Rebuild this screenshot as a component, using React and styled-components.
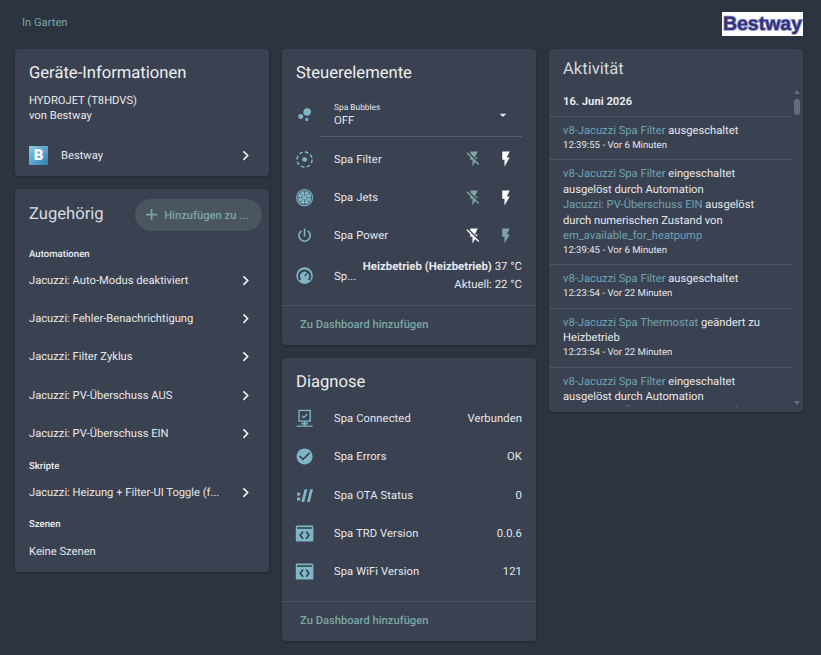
import React from 'react';
import styled, { createGlobalStyle } from 'styled-components';

const ACCENT = '#7fb6c6';
const ACCENT_DIM = '#7ea6a6';
const LINK = '#6fa3b3';
const MUTED = '#7ba6a6';
const TEXT = '#e6e8ec';
const CARD = '#3a4150';

const GlobalStyle = createGlobalStyle`
  html, body { margin: 0; padding: 0; }
  body {
    background: #2c3440;
    font-family: Roboto, "Liberation Sans", sans-serif;
    color: ${TEXT};
    width: 821px;
    height: 655px;
    overflow: hidden;
    text-rendering: geometricPrecision;
  }
`;

const TopBar = styled.header`
  height: 49px;
  padding: 12px 18px 0 22px;
  box-sizing: border-box;
  display: flex;
  justify-content: space-between;
  align-items: flex-start;
`;

const AreaLink = styled.span`
  font-size: 11.2px;
  line-height: 22px;
  color: ${MUTED};
`;

const Logo = styled.div`
  width: 81px;
  height: 24px;
  background: #ffffff;
  color: #3a3078;
  font: 700 19.5px/24px "Liberation Sans", sans-serif;
  text-align: center;
  -webkit-text-stroke: 1.6px #8c9fd0;
  paint-order: stroke fill;
`;

const Columns = styled.main`
  display: grid;
  grid-template-columns: repeat(3, 254px);
  gap: 13px;
  padding-left: 15px;
`;

const Column = styled.div`
  display: flex;
  flex-direction: column;
  gap: 13px;
  align-items: stretch;
`;

const Card = styled.section`
  background: ${CARD};
  border-radius: 4px;
  box-shadow: 0 1px 3px rgba(0, 0, 0, 0.25);
  overflow: hidden;
`;

const CardTitle = styled.h2`
  margin: 0;
  padding: 14px 14px 0;
  font-size: 16.6px;
  line-height: 22px;
  font-weight: 400;
  color: #eceef1;
`;

const DeviceName = styled.div`
  margin-top: 8px;
  padding: 0 14px;
  font-size: 11.2px;
  line-height: 15px;
`;

const DeviceMaker = styled.div`
  padding: 0 14px;
  font-size: 11.2px;
  line-height: 15px;
`;

const BrandRow = styled.div`
  display: flex;
  align-items: center;
  height: 41px;
  margin-top: 12px;
  padding: 0 14px;
  font-size: 11.2px;
`;

const BrandTile = styled.div`
  width: 19px;
  height: 19px;
  background: linear-gradient(135deg, #8ccbe4, #2f7fb4);
  color: #ffffff;
  font-weight: 900;
  font-size: 15px;
  line-height: 19px;
  text-align: center;
`;

const BrandName = styled.span`
  margin-left: 13px;
  flex: 1;
`;

const Chevron = styled.span`
  display: flex;
  color: #f0f2f4;
  flex: none;
`;

const RelatedHeader = styled.div`
  display: flex;
  align-items: center;
  justify-content: space-between;
  padding: 10px 7px 0 14px;
  height: 32px;
  margin-bottom: 16px;
`;

const RelatedTitle = styled.h2`
  margin: 0;
  padding-bottom: 2px;
  font-size: 16.6px;
  font-weight: 400;
  color: #d9dce2;
`;

const AddButton = styled.div`
  display: flex;
  align-items: center;
  gap: 3px;
  width: 127px;
  height: 32px;
  box-sizing: border-box;
  padding-left: 7px;
  border-radius: 16px;
  background: #4a5560;
  color: ${MUTED};
  font-size: 11.2px;
  font-weight: 500;
  white-space: nowrap;
`;

const GroupLabel = styled.div`
  padding: 0 14px;
  margin-top: 6px;
  margin-bottom: -2px;
  font-size: 9.6px;
  line-height: 16px;
  font-weight: 500;
  color: #eceef1;
`;

const NavRow = styled.div`
  display: flex;
  align-items: center;
  justify-content: space-between;
  height: 38.4px;
  padding: 0 14px;
  font-size: 11.2px;
`;

const NavText = styled.span`
  color: ${TEXT};
  white-space: nowrap;
`;

const EmptyText = styled.div`
  padding: 13px 14px 12px;
  font-size: 11.2px;
  line-height: 16px;
`;

const IconSlot = styled.span`
  width: 24px;
  height: 24px;
  flex: none;
  display: flex;
  align-items: center;
  justify-content: center;
`;

const SelectRow = styled.div`
  display: flex;
  align-items: center;
  gap: 3px;
  height: 44px;
  margin-top: 8px;
  margin-bottom: 3px;
  padding: 0 14px 0 11px;
`;

const SelectBox = styled.div`
  flex: 1;
  height: 44px;
  box-sizing: border-box;
  display: flex;
  align-items: center;
  justify-content: space-between;
  padding: 0 11px 0 14px;
  border-bottom: 1px solid #565d6b;
`;

const SelectText = styled.div`
  margin-top: 2px;
`;

const SelectLabel = styled.div`
  font-size: 8.4px;
  line-height: 10px;
`;

const SelectValue = styled.div`
  font-size: 11.2px;
  line-height: 15px;
`;

const EntityRow = styled.div`
  display: flex;
  align-items: center;
  height: 38.4px;
  padding: 0 14px 0 11px;
  font-size: 11.2px;
  letter-spacing: 0.1px;
`;

const EntityName = styled.span`
  margin-left: 17px;
  flex: 1;
`;

const EntityValue = styled.span`
  text-align: right;
`;

const FlashButtons = styled.span`
  display: flex;
  gap: 14px;
  margin-right: 7px;
`;

const ClimateRow = styled.div`
  display: flex;
  align-items: center;
  height: 41px;
  padding: 0 14px 0 11px;
  font-size: 11.4px;
`;

const ClimateName = styled.span`
  margin-left: 17px;
  width: 28px;
  flex: none;
`;

const ClimateState = styled.div`
  flex: 1;
  text-align: right;
  white-space: nowrap;
`;

const ClimateLine = styled.div`
  line-height: 17.3px;
  strong { font-weight: 700; }
`;

const CardFooter = styled.div`
  margin-top: 9px;
  border-top: 1px solid #4c5361;
  padding: 0 18px;
  height: 39px;
  line-height: 38px;
  font-size: 11.2px;
  font-weight: 500;
  color: ${MUTED};
`;

const DiagnosticList = styled.div`
  margin-top: 5px;
  margin-bottom: 10px;
`;

const ActivityTitle = styled.h2`
  margin: 0;
  padding: 10px 14px 0;
  font-size: 16.6px;
  line-height: 22px;
  font-weight: 400;
  color: #d4d7dd;
`;

const LogViewport = styled.div`
  position: relative;
  height: 322px;
  margin: 4px 0 5px;
  overflow: hidden;
`;

const LogDate = styled.div`
  padding: 8px 14px 0;
  height: 32px;
  box-sizing: border-box;
  line-height: 18px;
  font-size: 11.2px;
  font-weight: 700;
  border-bottom: 1px solid #4c5361;
  margin-right: 11px;
`;

const LogEntry = styled.div`
  padding: 6px 14px 7.5px;
  margin-right: 11px;
  border-bottom: 1px solid #4c5361;
`;

const LogLine = styled.div`
  font-size: 11.2px;
  line-height: 15.4px;
  white-space: nowrap;
`;

const A = styled.span`
  color: ${LINK};
`;

const LogTime = styled.div`
  font-size: 9.6px;
  line-height: 12px;
  margin-top: 1.5px;
`;

const ScrollUp = styled.span`
  position: absolute;
  right: 3px;
  top: 5px;
  border: 3px solid transparent;
  border-top: 0;
  border-bottom: 4px solid #656d7a;
`;

const ScrollThumb = styled.span`
  position: absolute;
  right: 3px;
  top: 14px;
  width: 6px;
  height: 16px;
  border-radius: 3px;
  background: #656d7a;
`;

const ScrollDown = styled.span`
  position: absolute;
  right: 3px;
  bottom: 2px;
  border: 3px solid transparent;
  border-bottom: 0;
  border-top: 4px solid #656d7a;
`;

const PATHS = {
  chevron: 'M8.59,16.58L13.17,12L8.59,7.41L10,6L16,12L10,18L8.59,16.58Z',
  plus: 'M19,13H13V19H11V13H5V11H11V5H13V11H19V13Z',
  down: 'M7,10L12,15L17,10H7Z',
  flash: 'M7,2V13H10V22L17,10H13L17,2H7Z',
  flashOff: 'M17,10H13L17,2H7V4.18L15.46,12.64M3.27,3L2,4.27L7,9.27V13H10V22L13.58,15.86L17.73,20L19,18.73L3.27,3Z',
  power: 'M16.56,5.44L15.11,6.89C16.84,7.94 18,9.83 18,12A6,6 0 0,1 12,18A6,6 0 0,1 6,12C6,9.83 7.16,7.94 8.88,6.88L7.44,5.44C5.36,6.88 4,9.28 4,12A8,8 0 0,0 12,20A8,8 0 0,0 20,12C20,9.28 18.64,6.88 16.56,5.44M13,3H11V13H13',
  check: 'M12 2C6.5 2 2 6.5 2 12S6.5 22 12 22 22 17.5 22 12 17.5 2 12 2M10 17L5 12L6.41 10.59L10 14.17L17.59 6.58L19 8L10 17Z',
  bubbles: 'M7.2,11.2C8.97,11.2 10.4,12.63 10.4,14.4C10.4,16.17 8.97,17.6 7.2,17.6C5.43,17.6 4,16.17 4,14.4C4,12.63 5.43,11.2 7.2,11.2M14.8,16A2,2 0 0,1 16.8,18A2,2 0 0,1 14.8,20A2,2 0 0,1 12.8,18A2,2 0 0,1 14.8,16M15.2,4A4.8,4.8 0 0,1 20,8.8C20,11.45 17.85,13.6 15.2,13.6A4.8,4.8 0 0,1 10.4,8.8C10.4,6.15 12.55,4 15.2,4Z',
  status: 'M2.5,8.5H6.5V12H2.5ZM2.5,14.5H6.5V18H2.5ZM12,4H15.5L11.5,20H8ZM19,4H22.5L18.5,20H15Z',
};

const Icon = ({ name, size = 19.2, color = 'currentColor' }) => (
  <svg width={size} height={size} viewBox="0 0 24 24" fill={color} aria-hidden="true">
    <path d={PATHS[name]} />
  </svg>
);

const FilterIcon = () => (
  <svg width="19.2" height="19.2" viewBox="0 0 24 24" fill="none" stroke={ACCENT} aria-hidden="true">
    <circle cx="12" cy="12" r="9.4" strokeWidth="1.8" strokeDasharray="4.6 2.8" />
    <circle cx="12" cy="12" r="3" fill={ACCENT} stroke="none" />
  </svg>
);

const JetsIcon = () => (
  <svg width="19.2" height="19.2" viewBox="0 0 24 24" fill="none" stroke={ACCENT} aria-hidden="true">
    <circle cx="12" cy="12" r="8.4" fill={ACCENT} stroke="none" />
    <circle cx="12" cy="12" r="10" strokeWidth="1.4" />
    <path d="M12 4v16M4 12h16M6.3 6.3l11.4 11.4M17.7 6.3L6.3 17.7" stroke={CARD} strokeWidth="0.8" />
    <circle cx="12" cy="12" r="2.2" fill={ACCENT} stroke="none" />
  </svg>
);

const ThermostatIcon = () => (
  <svg width="19.2" height="19.2" viewBox="0 0 24 24" aria-hidden="true">
    <circle cx="12" cy="12" r="10.4" fill={ACCENT} />
    <path d="M6.8 17.4A7 7 0 1 1 17.2 17.4" fill="none" stroke={CARD} strokeWidth="2.8" />
    <path d="M12 12.5l3.4-3.4" stroke={CARD} strokeWidth="1.6" />
  </svg>
);

const ConnectedIcon = () => (
  <svg width="19.2" height="19.2" viewBox="0 0 24 24" fill="none" stroke={ACCENT} aria-hidden="true">
    <rect x="5" y="1.8" width="14" height="13.4" strokeWidth="1.7" />
    <path d="M8.6 8.4l2.4 2.4 4.4-4.6" strokeWidth="1.7" />
    <path d="M12 15v6M2 21.4h20" strokeWidth="1.8" />
    <path d="M8 18.2h8" strokeWidth="2.2" />
  </svg>
);

const BracesIcon = () => (
  <svg width="19.2" height="19.2" viewBox="0 0 24 24" aria-hidden="true">
    <rect x="1" y="2" width="22" height="20" rx="1.5" fill={ACCENT} />
    <rect x="2.6" y="4" width="18.8" height="2" fill={CARD} />
    <path d="M10 9.4L6.6 14l3.4 4.6M14 9.4L17.4 14 14 18.6" fill="none" stroke={CARD} strokeWidth="2.1" />
  </svg>
);

const RELATED = [
  'Jacuzzi: Auto-Modus deaktiviert',
  'Jacuzzi: Fehler-Benachrichtigung',
  'Jacuzzi: Filter Zyklus',
  'Jacuzzi: PV-Überschuss AUS',
  'Jacuzzi: PV-Überschuss EIN',
];

const DIAGNOSTICS = [
  { icon: <ConnectedIcon />, name: 'Spa Connected', value: 'Verbunden' },
  { icon: <Icon name="check" color={ACCENT} />, name: 'Spa Errors', value: 'OK' },
  { icon: <Icon name="status" color={ACCENT} />, name: 'Spa OTA Status', value: '0' },
  { icon: <BracesIcon />, name: 'Spa TRD Version', value: '0.0.6' },
  { icon: <BracesIcon />, name: 'Spa WiFi Version', value: '121' },
];

const LOG = [
  {
    lines: [<><A>v8-Jacuzzi Spa Filter</A> ausgeschaltet</>],
    time: '12:39:55 - Vor 6 Minuten',
  },
  {
    lines: [
      <><A>v8-Jacuzzi Spa Filter</A> eingeschaltet</>,
      'ausgelöst durch Automation',
      <><A>Jacuzzi: PV-Überschuss EIN</A> ausgelöst</>,
      'durch numerischen Zustand von',
      <A>em_available_for_heatpump</A>,
    ],
    time: '12:39:45 - Vor 6 Minuten',
  },
  {
    lines: [<><A>v8-Jacuzzi Spa Filter</A> ausgeschaltet</>],
    time: '12:23:54 - Vor 22 Minuten',
  },
  {
    lines: [<><A>v8-Jacuzzi Spa Thermostat</A> geändert zu</>, 'Heizbetrieb'],
    time: '12:23:54 - Vor 22 Minuten',
  },
  {
    lines: [
      <><A>v8-Jacuzzi Spa Filter</A> eingeschaltet</>,
      'ausgelöst durch Automation',
      <><A>Jacuzzi: PV-Überschuss EIN</A> ausgelöst</>,
    ],
    time: '',
  },
];

const InfoCard = () => (
  <Card>
    <CardTitle>Geräte-Informationen</CardTitle>
    <DeviceName>HYDROJET (T8HDVS)</DeviceName>
    <DeviceMaker>von Bestway</DeviceMaker>
    <BrandRow>
      <BrandTile>B</BrandTile>
      <BrandName>Bestway</BrandName>
      <Chevron><Icon name="chevron" /></Chevron>
    </BrandRow>
  </Card>
);

const RelatedGroup = ({ title, items }) => (
  <>
    <GroupLabel>{title}</GroupLabel>
    {items.map((item) => (
      <NavRow key={item}>
        <NavText>{item}</NavText>
        <Chevron><Icon name="chevron" /></Chevron>
      </NavRow>
    ))}
  </>
);

const RelatedCard = () => (
  <Card>
    <RelatedHeader>
      <RelatedTitle>Zugehörig</RelatedTitle>
      <AddButton>
        <Icon name="plus" />
        <span>Hinzufügen zu ...</span>
      </AddButton>
    </RelatedHeader>
    <RelatedGroup title="Automationen" items={RELATED} />
    <RelatedGroup title="Skripte" items={['Jacuzzi: Heizung + Filter-UI Toggle (f...']} />
    <GroupLabel>Szenen</GroupLabel>
    <EmptyText>Keine Szenen</EmptyText>
  </Card>
);

const SwitchRow = ({ icon, name, offActive, onActive }) => (
  <EntityRow>
    <IconSlot>{icon}</IconSlot>
    <EntityName>{name}</EntityName>
    <FlashButtons>
      <Icon name="flashOff" size={18} color={offActive ? '#ffffff' : ACCENT_DIM} />
      <Icon name="flash" size={18} color={onActive ? '#ffffff' : ACCENT_DIM} />
    </FlashButtons>
  </EntityRow>
);

const ControlsCard = () => (
  <Card>
    <CardTitle>Steuerelemente</CardTitle>
    <SelectRow>
      <IconSlot><Icon name="bubbles" color={ACCENT} /></IconSlot>
      <SelectBox>
        <SelectText>
          <SelectLabel>Spa Bubbles</SelectLabel>
          <SelectValue>OFF</SelectValue>
        </SelectText>
        <Icon name="down" size={16} />
      </SelectBox>
    </SelectRow>
    <SwitchRow icon={<FilterIcon />} name="Spa Filter" onActive />
    <SwitchRow icon={<JetsIcon />} name="Spa Jets" onActive />
    <SwitchRow icon={<Icon name="power" color={ACCENT} />} name="Spa Power" offActive />
    <ClimateRow>
      <IconSlot><ThermostatIcon /></IconSlot>
      <ClimateName>Sp...</ClimateName>
      <ClimateState>
        <ClimateLine><strong>Heizbetrieb (Heizbetrieb)</strong> 37 °C</ClimateLine>
        <ClimateLine>Aktuell: 22 °C</ClimateLine>
      </ClimateState>
    </ClimateRow>
    <CardFooter>Zu Dashboard hinzufügen</CardFooter>
  </Card>
);

const DiagnosticsCard = () => (
  <Card>
    <CardTitle>Diagnose</CardTitle>
    <DiagnosticList>
      {DIAGNOSTICS.map((row) => (
        <EntityRow key={row.name}>
          <IconSlot>{row.icon}</IconSlot>
          <EntityName>{row.name}</EntityName>
          <EntityValue>{row.value}</EntityValue>
        </EntityRow>
      ))}
    </DiagnosticList>
    <CardFooter>Zu Dashboard hinzufügen</CardFooter>
  </Card>
);

const ActivityCard = () => (
  <Card>
    <ActivityTitle>Aktivität</ActivityTitle>
    <LogViewport>
      <LogDate>16. Juni 2026</LogDate>
      {LOG.map((entry, i) => (
        <LogEntry key={i}>
          {entry.lines.map((line, j) => <LogLine key={j}>{line}</LogLine>)}
          {entry.time && <LogTime>{entry.time}</LogTime>}
        </LogEntry>
      ))}
      <ScrollUp />
      <ScrollThumb />
      <ScrollDown />
    </LogViewport>
  </Card>
);

const App = () => (
  <>
    <GlobalStyle />
    <TopBar>
      <AreaLink>In Garten</AreaLink>
      <Logo>Bestway</Logo>
    </TopBar>
    <Columns>
      <Column>
        <InfoCard />
        <RelatedCard />
      </Column>
      <Column>
        <ControlsCard />
        <DiagnosticsCard />
      </Column>
      <Column>
        <ActivityCard />
      </Column>
    </Columns>
  </>
);

export default App;
